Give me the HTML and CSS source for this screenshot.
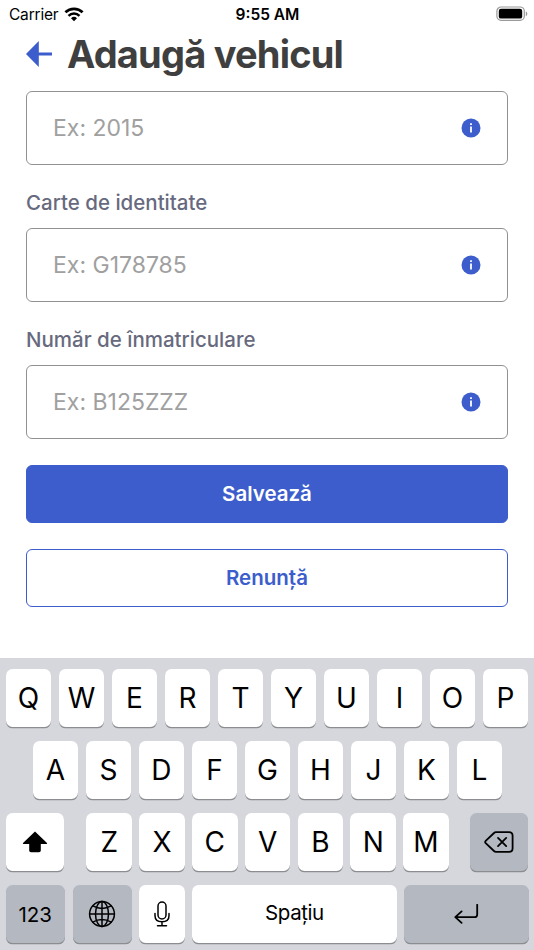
FILE: index.html
```
<!DOCTYPE html>
<html lang="ro">
<head>
  <meta charset="UTF-8">
  <meta name="viewport" content="width=device-width, initial-scale=1.0">
  <title>Adaugă vehicul</title>
  <link rel="stylesheet" href="styles.css">
</head>
<body>
  <div class="status-bar">
    <div class="carrier">
      <span>Carrier</span>
      <svg width="20" height="15" viewBox="0 0 20 15">
        <path d="M1.4 5.3a12.4 12.4 0 0 1 17.2 0" fill="none" stroke="#000" stroke-width="2.7"/>
        <path d="M4.5 8.8a8 8 0 0 1 11 0" fill="none" stroke="#000" stroke-width="2.5"/>
        <path d="M10 14.3l-3-3.1a4.3 4.3 0 0 1 6 0z"/>
      </svg>
    </div>
    <div class="clock">9:55 AM</div>
    <div class="battery">
      <svg width="32" height="16" viewBox="0 0 32 16">
        <rect x="0.9" y="1" width="27.4" height="13.4" rx="4.2" fill="none" stroke="#999" stroke-width="1.2"/>
        <rect x="2.8" y="2.8" width="23.4" height="9.8" rx="2.2"/>
        <path d="M29.8 5.4c2 .7 2 3.9 0 4.6z" fill="#999"/>
      </svg>
    </div>
  </div>

  <header class="header">
    <svg class="back" width="26" height="26" viewBox="0 0 26 26">
      <path d="M0 13L12.8 0v11.5H26v3H12.8V26z" fill="#3c5dcb"/>
    </svg>
    <h1>Adaugă vehicul</h1>
  </header>

  <main class="form">
    <div class="input-box">
      <input type="text" placeholder="Ex: 2015">
      <svg class="info" viewBox="0 0 20 20"><circle cx="10" cy="10" r="9.5"/><path d="M9.1 5.2h1.8V7H9.1zM9.1 8.6h1.8v6H9.1z" fill="#fff"/></svg>
    </div>
    <label for="identity">Carte de identitate</label>
    <div class="input-box">
      <input type="text" id="identity" placeholder="Ex: G178785">
      <svg class="info" viewBox="0 0 20 20"><circle cx="10" cy="10" r="9.5"/><path d="M9.1 5.2h1.8V7H9.1zM9.1 8.6h1.8v6H9.1z" fill="#fff"/></svg>
    </div>
    <label for="plate">Număr de înmatriculare</label>
    <div class="input-box">
      <input type="text" id="plate" placeholder="Ex: B125ZZZ">
      <svg class="info" viewBox="0 0 20 20"><circle cx="10" cy="10" r="9.5"/><path d="M9.1 5.2h1.8V7H9.1zM9.1 8.6h1.8v6H9.1z" fill="#fff"/></svg>
    </div>
    <button class="btn btn-save">Salvează</button>
    <button class="btn btn-cancel">Renunță</button>
  </main>

  <div class="keyboard">
    <div class="row">
      <div class="key">Q</div>
      <div class="key">W</div>
      <div class="key">E</div>
      <div class="key">R</div>
      <div class="key">T</div>
      <div class="key">Y</div>
      <div class="key">U</div>
      <div class="key">I</div>
      <div class="key">O</div>
      <div class="key">P</div>
    </div>
    <div class="row row-middle">
      <div class="key">A</div>
      <div class="key">S</div>
      <div class="key">D</div>
      <div class="key">F</div>
      <div class="key">G</div>
      <div class="key">H</div>
      <div class="key">J</div>
      <div class="key">K</div>
      <div class="key">L</div>
    </div>
    <div class="row">
      <div class="key shift">
        <svg width="26" height="22" viewBox="0 0 26 22">
          <path d="M13 .5L25 12q.6 1-.6 1H18.800v6.500q0 1.800-1.800 1.800H9q-1.800 0-1.800-1.800V13H1.600q-1.200 0-.6-1z"/>
        </svg>
      </div>
      <div class="key">Z</div>
      <div class="key">X</div>
      <div class="key">C</div>
      <div class="key">V</div>
      <div class="key">B</div>
      <div class="key">N</div>
      <div class="key">M</div>
      <div class="key dark delete">
        <svg class="line" width="30" height="22" viewBox="0 0 30 22">
          <path d="M12 1.200H25q3.600 0 3.600 3.600v12.400q0 3.600-3.600 3.600H12q-1.200 0-2-.8L1.700 12.200q-1.100-1.200 0-2.400L10 2q.8-.8 2-.8z"/>
          <path d="M14 6.900l8.200 8.200M22.200 6.900L14 15.100"/>
        </svg>
      </div>
    </div>
    <div class="row">
      <div class="key dark numbers">123</div>
      <div class="key dark globe">
        <svg class="line thin" width="28" height="28" viewBox="0 0 28 28">
          <circle cx="14" cy="14" r="12.400"/>
          <ellipse cx="14" cy="14" rx="6.500" ry="12.400"/>
          <path d="M14 1.600v24.800M1.600 14h24.800M4.800 5.900q9.200 5 18.400 0M4.800 22.100q9.200-5 18.400 0"/>
        </svg>
      </div>
      <div class="key mic">
        <svg class="line thin" width="16" height="26" viewBox="0 0 16 26">
          <rect x="4" y="1" width="8" height="17" rx="4"/>
          <path d="M1 12.500v2.200q0 6 7 6t7-6v-2.200M8 20.700v4M3.500 24.700h9"/>
        </svg>
      </div>
      <div class="key space">Spațiu</div>
      <div class="key dark return">
        <svg class="line" width="26" height="20" viewBox="0 0 26 20">
          <path d="M24.200.8v9.600q0 2.800-2.800 2.800H2.500M8.600 7.400l-6.300 5.800 6.300 5.600"/>
        </svg>
      </div>
    </div>
  </div>
</body>
</html>
```

FILE: styles.css
```
* {
  box-sizing: border-box;
}
body {
  margin: 0;
  height: 950px;
  display: flex;
  flex-direction: column;
  overflow: hidden;
  background: #fff;
  font-family: Inter, "Liberation Sans", sans-serif;
}
svg {
  display: block;
  flex: none;
}
.status-bar {
  height: 27px;
  padding: 0 6px 0 9px;
  display: grid;
  grid-template-columns: 1fr auto 1fr;
  align-items: center;
  font-size: 15.5px;
  line-height: 27px;
}
.carrier {
  display: flex;
  align-items: center;
  gap: 6px;
  letter-spacing: -0.2px;
}
.carrier span {
  padding-top: 1px;
}
.clock {
  padding: 1px 2px 0 0;
  font-weight: 600;
}
.battery {
  justify-self: end;
}
.header {
  height: 64px;
  padding: 0 26px;
  display: flex;
  align-items: center;
  gap: 15px;
}
.back {
  margin-bottom: 10px;
}
h1 {
  margin: 0 0 10px;
  font-size: 38px;
  line-height: 46px;
  font-weight: 700;
  letter-spacing: -0.8px;
  color: #3f3f40;
  white-space: nowrap;
}
.form {
  padding: 0 26px;
  display: flex;
  flex-direction: column;
}
.input-box {
  height: 73.5px;
  padding: 0 26px;
  display: flex;
  align-items: center;
  border: 1px solid #919191;
  border-radius: 6px;
}
input {
  flex: 1;
  min-width: 0;
  padding: 0;
  border: none;
  outline: none;
  background: none;
  font-family: inherit;
  font-size: 23px;
}
input::placeholder {
  color: #a0a0a0;
  opacity: 1;
}
.info {
  width: 20px;
  height: 20px;
  fill: #3c5dcb;
}
label {
  height: 63.7px;
  padding-top: 24.5px;
  font-size: 20.5px;
  line-height: 27px;
  font-weight: 500;
  color: #676a7e;
}
.btn {
  height: 58px;
  margin-top: 26px;
  padding: 0;
  border: 1px solid #3c5dcb;
  border-radius: 6px;
  font-family: inherit;
  font-size: 20.5px;
  font-weight: 600;
}
.btn-save {
  background: #3c5dcb;
  color: #fff;
}
.btn-cancel {
  background: #fff;
  color: #3c5dcb;
}
.keyboard {
  height: 292px;
  margin-top: auto;
  padding: 10.5px 5.5px 0;
  display: flex;
  flex-direction: column;
  gap: 14.3px;
  background: #d6d7dc;
}
.row {
  display: flex;
  gap: 7.2px;
}
.row-middle {
  padding: 0 26px 0 27px;
}
.key {
  flex: 1;
  height: 58px;
  display: flex;
  align-items: center;
  justify-content: center;
  background: #fff;
  border-radius: 6.5px;
  box-shadow: 0 1.3px 0 #8b8d91;
  font-size: 28px;
  color: #000;
}
.dark {
  background: #b3b8c1;
}
.shift,
.delete {
  flex: none;
  width: 58px;
}
.shift {
  margin-right: 15.8px;
}
.delete {
  margin-left: 14.5px;
}
.numbers,
.globe {
  flex: none;
  width: 59.5px;
}
.numbers {
  font-size: 20.5px;
}
.globe {
  margin-left: 0.5px;
}
.mic {
  flex: none;
  width: 45.5px;
}
.space {
  font-size: 20.5px;
  padding-bottom: 3px;
  letter-spacing: -0.4px;
}
.return {
  flex: none;
  width: 124.5px;
}
.line {
  fill: none;
  stroke: #000;
  stroke-width: 1.8;
  stroke-linecap: round;
  stroke-linejoin: round;
}
.thin {
  stroke-width: 1.5;
}
```
